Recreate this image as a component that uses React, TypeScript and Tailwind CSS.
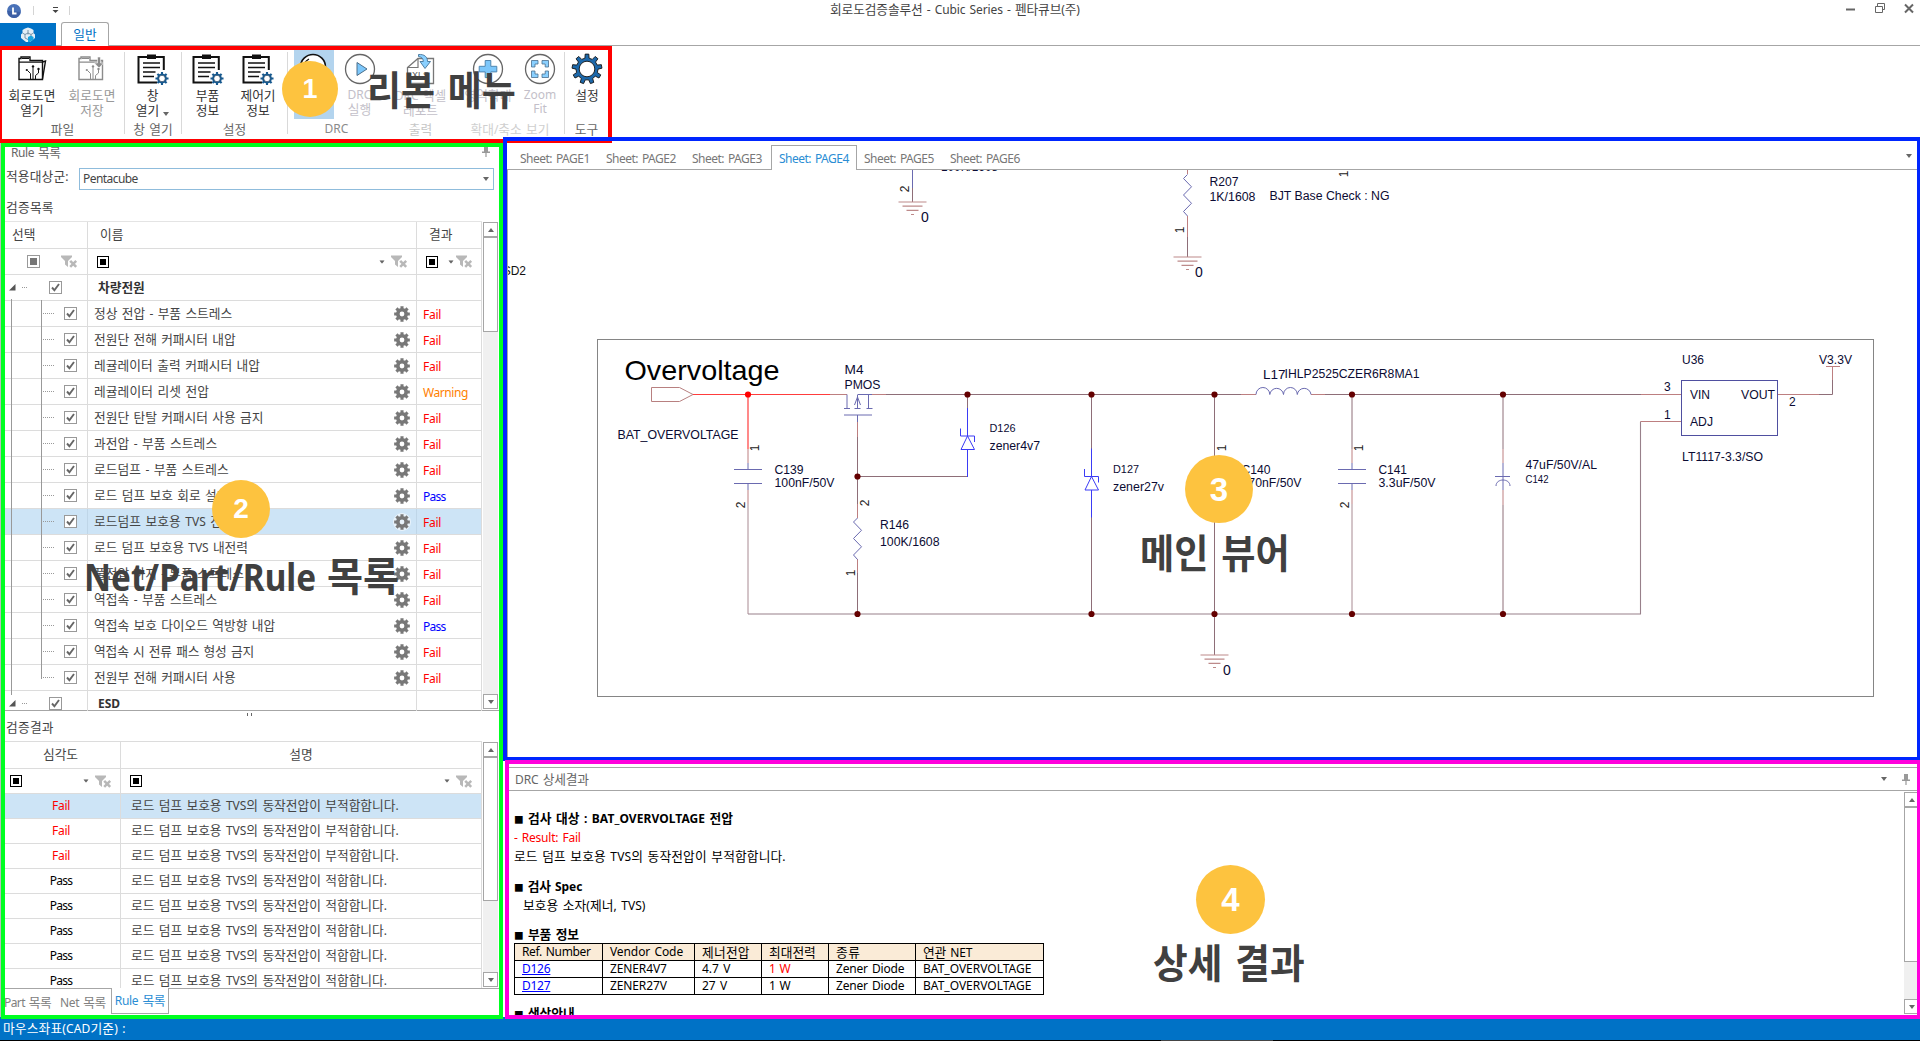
import React, { useLayoutEffect, useRef, useState } from 'react';

type TextProps = { children: string; w?: number; className?: string; stretch?: boolean };

/* Text run: Hangul is set one step larger than Latin; `w` fits the run to a width. */
function T({ children, w, className = '', stretch = false }: TextProps) {
  const ref = useRef<HTMLSpanElement>(null);
  const [fit, setFit] = useState<{ ls: number; sx: number }>({ ls: 0, sx: 1 });
  useLayoutEffect(() => {
    if (!w || !ref.current) return;
    const natural = ref.current.offsetWidth;
    if (stretch) setFit({ ls: 0, sx: w / natural });
    else setFit({ ls: (w - natural) / children.length, sx: 1 });
  }, [w, children, stretch]);
  const parts = children.split(/([\u3130-\uD7A3]+|■)/).filter(Boolean);
  return (
    <span
      ref={ref}
      className={'inline-block origin-left whitespace-pre leading-[16px] [word-spacing:0.1em] ' + className}
      style={{ letterSpacing: fit.ls ? `${fit.ls}px` : undefined, transform: fit.sx !== 1 ? `scaleX(${fit.sx})` : undefined }}
    >
      {parts.map((p, i) => (
        <span key={i} className={p === '■' ? 'text-[0.8em]' : /[\u3130-\uD7A3]/.test(p) ? 'text-[1.06em]' : ''}>
          {p}
        </span>
      ))}
    </span>
  );
}

const Down = ({ className = '' }: { className?: string }) => (
  <svg className={className} width="6" height="4" viewBox="0 0 6 4">
    <path d="M0 0h6L3 4z" fill="#666" />
  </svg>
);

const Pin = () => (
  <svg width="8" height="11" viewBox="0 0 8 11">
    <path d="M2 0h4v5.5h2V7H4.6v4H3.4V7H0V5.500h2z" fill="#999" />
  </svg>
);

const FilterX = () => (
  <svg width="17" height="13" viewBox="0 0 17 13">
    <path d="M0 0.500h11v1.500L7 6v6L4 9.500V6L0 2z" fill="#b8b8b8" />
    <path d="M9 5.500l6.500 6.500M15.500 5.500L9 12" stroke="#fff" strokeWidth="4" />
    <path d="M9.200 5.800l6 6M15.200 5.800l-6 6" stroke="#b8b8b8" strokeWidth="2.500" />
  </svg>
);

const BlackBox = () => (
  <span className="flex h-3 w-3 items-center justify-center border border-black">
    <span className="h-1.5 w-1.5 bg-black" />
  </span>
);

const Check = () => (
  <span className="flex h-[13px] w-[13px] shrink-0 items-center justify-center border border-[#999] bg-white">
    <svg width="9" height="9" viewBox="0 0 9 9">
      <path d="M1 4.500l2.400 2.700L8 1" fill="none" stroke="#666" strokeWidth="1.900" />
    </svg>
  </span>
);

function gearPath(cx: number, cy: number, ro: number, ri: number, n: number, a: number, b: number) {
  let d = '';
  for (let i = 0; i < n; i++) {
    const t = (i * 2 * Math.PI) / n;
    [
      [ri, -b],
      [ro, -a],
      [ro, a],
      [ri, b],
    ].forEach(([r, o], k) => {
      d += `${i === 0 && k === 0 ? 'M' : 'L'}${(cx + r * Math.sin(t + o)).toFixed(2)} ${(cy - r * Math.cos(t + o)).toFixed(2)}`;
    });
  }
  return d + 'Z';
}

const SmallGear = ({ halo = false }: { halo?: boolean }) => (
  <svg width="18" height="18" viewBox="0 0 18 18">
    {halo && <circle cx="9" cy="9" r="9" fill="#e9f3fb" />}
    <path
      d={gearPath(9, 9, 8, 6, 8, 0.2, 0.25) + 'M9 6.600a2.400 2.400 0 1 0 0 4.800a2.400 2.400 0 1 0 0 -4.800Z'}
      fill="#787878"
      fillRule="evenodd"
    />
  </svg>
);

/* ---------- ribbon icons ---------- */
const Folder = ({ save = false }: { save?: boolean }) => {
  const c = save ? '#8c8c8c' : '#111';
  return (
    <svg width="30" height="32" viewBox="0 0 30 32" fill="none" stroke={c} strokeWidth="1.400">
      <path d="M2 26.500V5.500h2V4h9v3.500h12.500v19z" />
      <path d="M2 9.200h23M5 5.500h7" strokeWidth="1.200" />
      {!save && <path d="M25.500 9l3-1-3 18" />}
      <path d="M13.500 26v-5.500l-3-3M16 26V14.500M18.500 26v-3.500l3-2.500v-3.500" strokeWidth="1" />
      <circle cx="9.800" cy="17" r="1.100" fill={c} stroke="none" />
      <circle cx="16" cy="13.500" r="1.200" fill={c} stroke="none" />
      <circle cx="21.500" cy="16" r="1.200" fill={c} stroke="none" />
      {save && <path d="M20.500 4h3v6h3.200L22 15l-4.700-5h3.200z" fill={c} stroke="#fff" strokeWidth="0.600" />}
    </svg>
  );
};

const Clip = () => (
  <svg width="32" height="32" viewBox="0 0 32 32" fill="none">
    <path d="M26.800 17V4H1.500v25.500H20" stroke="#111" strokeWidth="2" />
    <path d="M10 1.500h9V6h-9z" fill="#111" />
    <path d="M6 10h17M6 14.500h17M6 19h12.500M6 23.500h11" stroke="#111" strokeWidth="1.700" />
    <path d={gearPath(25, 25.500, 6.600, 4.900, 8, 0.16, 0.22)} fill="#17598f" />
    <circle cx="25" cy="25.500" r="3.200" fill="#fff" stroke="#0d2f4d" strokeWidth="0.600" />
  </svg>
);

const Ring = ({ children }: { children?: React.ReactNode }) => (
  <svg width="32" height="32" viewBox="0 0 32 32" fill="none">
    <circle cx="16" cy="16" r="14.500" stroke="#666" strokeWidth="1.300" fill="#fff" />
    {children}
  </svg>
);

const icons: Record<string, React.ReactNode> = {
  open: <Folder />,
  save: <Folder save />,
  clip: <Clip />,
  lens: (
    <svg width="32" height="32" viewBox="0 0 32 32" fill="none">
      <circle cx="15" cy="14" r="12.500" stroke="#111" strokeWidth="1.600" fill="#fff" />
      <path d="M6 12a9.500 9.500 0 0 1 5-6" stroke="#111" strokeWidth="1.200" />
    </svg>
  ),
  play: (
    <Ring>
      <path d="M13 9.500v13l10-6.500z" fill="#7cc7fb" stroke="#4d6f8a" strokeWidth="1" />
    </Ring>
  ),
  xls: (
    <svg width="32" height="32" viewBox="0 0 32 32" fill="none">
      <path d="M2.500 30.500V14.500L13 5.500h15.500v25z" stroke="#777" strokeWidth="1.300" />
      <path d="M13 5.500v9H2.500" stroke="#777" strokeWidth="1.200" />
      <text x="7" y="25" fontSize="9" fill="#555" fontFamily="Liberation Sans" textLength="17">XLS</text>
      <path d="M13.500 1.500c6-.500 9 2.500 9 7h3L20 15.500l-5-7h3.300c0-2.500-1.300-4.500-4.800-5z" fill="#8ad0ff" stroke="#44749a" strokeWidth="0.900" />
    </svg>
  ),
  plus: (
    <Ring>
      <path d="M13.200 7.500h5.600v5.800h6v5.600h-6v5.700h-5.600v-5.700h-6v-5.600h6z" fill="#7cc7fb" stroke="#4f86b0" strokeWidth="1" />
    </Ring>
  ),
  fit: (
    <Ring>
      <path
        d="M7.500 14V7.500H14V11h-3v3zM18 7.500h6.500V14h-3.300v-3H18zM7.500 18H11v3h3v3.500H7.500zM24.500 18v6.500H18V21h3.200v-3z"
        fill="#8ad0ff"
        stroke="#4a6f8e"
        strokeWidth="0.800"
      />
    </Ring>
  ),
  gear: (
    <svg width="32" height="32" viewBox="0 0 32 32">
      <path d={gearPath(16, 16, 15, 11, 9, 0.12, 0.19)} fill="#1c68aa" stroke="#141414" strokeWidth="0.900" />
      <circle cx="16" cy="16" r="7.800" fill="#fff" stroke="#141414" strokeWidth="0.900" />
    </svg>
  ),
};

type Btn = { icon: string; l1: string; l2?: string; w: string; faded?: boolean; gray?: boolean; on?: boolean; more?: boolean };
const groups: { w: string; pad: string; cap: string; tone: string; btns: Btn[] }[] = [
  { w: 'w-[124px] border-[#d9d9d9]', pad: 'pl-px', cap: '파일', tone: 'text-[#666]', btns: [
    { icon: 'open', l1: '회로도면', l2: '열기', w: 'w-[60px]' },
    { icon: 'save', l1: '회로도면', l2: '저장', w: 'w-[60px]', gray: true },
  ] },
  { w: 'w-[57px] border-[#d9d9d9]', pad: '', cap: '창 열기', tone: 'text-[#666]', btns: [{ icon: 'clip', l1: '창', l2: '열기', w: 'w-[55px]', more: true }] },
  { w: 'w-[106px] border-[#d9d9d9]', pad: '', cap: '설정', tone: 'text-[#666]', btns: [
    { icon: 'clip', l1: '부품', l2: '정보', w: 'w-[51px]' },
    { icon: 'clip', l1: '제어기', l2: '정보', w: 'w-[50px]' },
  ] },
  { w: 'w-[98px] border-transparent', pad: 'pl-1.5', cap: 'DRC', tone: 'text-[#8a8a8a]', btns: [
    { icon: 'lens', l1: '', w: 'w-[40px]', on: true },
    { icon: 'play', l1: 'DRC', l2: '실행', w: 'w-[51px]', faded: true },
  ] },
  { w: 'w-[70px] border-transparent', pad: '', cap: '출력', tone: 'text-[#c6c6c6]', btns: [{ icon: 'xls', l1: 'DRC 엑셀', l2: '레포트', w: 'w-[69px]', faded: true }] },
  { w: 'w-[109px] border-[#d9d9d9]', pad: 'pl-1.5', cap: '확대/축소 보기', tone: 'text-[#cfcfcf]', btns: [
    { icon: 'plus', l1: '영역확대', w: 'w-[52px]', faded: true },
    { icon: 'fit', l1: 'Zoom', l2: 'Fit', w: 'w-[52px]', faded: true },
  ] },
  { w: 'w-[44px] border-transparent', pad: '', cap: '도구', tone: 'text-[#666]', btns: [{ icon: 'gear', l1: '설정', w: 'w-[44px]' }] },
];

function Ribbon() {
  return (
    <div className="flex h-[91px] pl-px pt-1.5">
      {groups.map((g) => (
        <div key={g.cap + g.w} className={'flex h-[82px] shrink-0 flex-col border-r ' + g.w}>
          <div className={'-mt-0.5 flex h-[69px] shrink-0 ' + g.pad}>
            {g.btns.map((b, i) => (
              <div
                key={i}
                className={
                  'flex shrink-0 flex-col items-center ' + b.w + (b.on ? ' bg-[#b3d4ee]' : '') +
                  (b.gray ? ' text-[#999]' : b.faded ? ' text-[#c3bfc9]' : ' text-[#333]')
                }
              >
                <div className="mt-[3px] h-8">{icons[b.icon]}</div>
                <T className="mt-[3px] leading-[14px]!">{b.l1}</T>
                {b.l2 && (
                  <span className="flex items-center">
                    <T className="leading-[14px]!">{b.l2}</T>
                    {b.more && <Down className="mt-1.5 ml-1" />}
                  </span>
                )}
              </div>
            ))}
          </div>
          <div className={'mt-0.5 flex h-4 shrink-0 items-center justify-center ' + g.tone}>
            <T>{g.cap}</T>
          </div>
        </div>
      ))}
    </div>
  );
}

function TitleBar() {
  return (
    <div className="flex h-[22px] items-start">
      <div className="flex h-5 w-[830px] items-start">
        <svg width="80" height="20" viewBox="0 0 80 20">
          <circle cx="14" cy="11" r="7" fill="#4a72b8" />
          <path d="M7.500 11a6.500 6.500 0 0 0 13 1" fill="#3d5fa5" />
          <path d="M13 7.500v6h3.500" stroke="#fff" strokeWidth="1.800" fill="none" />
          <path d="M33.500 6v9M69.500 6v9" stroke="#d4d4d4" />
          <path d="M53 7.500h5" stroke="#444" />
          <path d="M52.500 10h6l-3 3z" fill="#444" />
        </svg>
      </div>
      <div className="pt-px text-[#444]">
        <T w={250}>회로도검증솔루션 - Cubic Series - 펜타큐브(주)</T>
      </div>
      <svg className="ml-auto" width="80" height="20" viewBox="1840 0 80 20" fill="none" stroke="#666">
        <path d="M1846 9.500h9" strokeWidth="2" />
        <path d="M1875.500 6.500h7v6h-7zM1877.500 6V3.500h7v6H1883" />
        <path d="M1905 4.500l8 8M1913 4.500l-8 8" strokeWidth="2" />
      </svg>
    </div>
  );
}

function RibbonTabs() {
  return (
    <div className="flex h-6 border-b border-[#a6a6a6]">
      <div className="mt-px flex h-[23px] w-14 items-center justify-center bg-[#0072c6]">
        <svg width="16" height="16" viewBox="0 0 16 16">
          <path d="M5 1.500L8 .5l3 1 2.500 1.500v3l1.500 1.500v3.500L12.500 13 10 15H6l-2.500-2L1 11V7.500L2.500 6V3z" fill="#e3eef6" />
          <path d="M8 3v4.500M2.500 6L5 7.500 8 6l3 1.500L13.500 6M5 7.500V11l3 1.500M11 7.500V11" stroke="#5f7f96" strokeWidth="0.800" fill="none" />
          <path d="M8 10l3-1.500 2.500 1.500v2.500L10 15H8z" fill="#1aa3dd" />
        </svg>
      </div>
      <div className="ml-[5px] flex h-6 w-12 items-center justify-center rounded-t-[3px] border border-b-0 border-[#a6a6a6] bg-white text-[#0072c6]">
        <T>일반</T>
      </div>
    </div>
  );
}

function ScrollBar({ thumb }: { thumb: string }) {
  return (
    <div className="flex h-full w-[15px] flex-col bg-[#f0f0f0]">
      <div className="flex h-[15px] shrink-0 items-center justify-center border border-[#a6a6a6] bg-white">
        <Down className="rotate-180" />
      </div>
      <div className={'w-full border border-[#a6a6a6] bg-white ' + thumb} />
      <div className="mt-auto flex h-[15px] shrink-0 items-center justify-center border border-[#a6a6a6] bg-white">
        <Down />
      </div>
    </div>
  );
}

const rules: [string, string, number][] = [
  ['정상 전압 - 부품 스트레스', 'Fail', 138],
  ['전원단 전해 커패시터 내압', 'Fail', 142],
  ['레귤레이터 출력 커패시터 내압', 'Fail', 166],
  ['레귤레이터 리셋 전압', 'Warning', 115],
  ['전원단 탄탈 커패시터 사용 금지', 'Fail', 169],
  ['과전압 - 부품 스트레스', 'Fail', 123],
  ['로드덤프 - 부품 스트레스', 'Fail', 135],
  ['로드 덤프 보호 회로 설계', 'Pass', 134],
  ['로드덤프 보호용 TVS 전압', 'Fail', 140],
  ['로드 덤프 보호용 TVS 내전력', 'Fail', 154],
  ['풀전압 하지 - 부품 스트레스', 'Fail', 150],
  ['역접속 - 부품 스트레스', 'Fail', 123],
  ['역접속 보호 다이오드 역방향 내압', 'Pass', 181],
  ['역접속 시 전류 패스 형성 금지', 'Fail', 160],
  ['전원부 전해 커패시터 사용', 'Fail', 142],
];

const resultColor: Record<string, string> = { Fail: 'text-[#f00]', Warning: 'text-[#ff8000]', Pass: 'text-[#00f]' };

function GroupRow({ name, w, last = false }: { name: string; w?: number; last?: boolean }) {
  return (
    <div className={'flex ' + (last ? 'h-5 overflow-hidden' : 'h-[26px] border-b border-[#dcdcdc]')}>
      <div className="flex h-[25px] w-[83px] items-center border-r border-[#dcdcdc] pl-1">
        <svg width="7" height="7" viewBox="0 0 7 7"><path d="M6.500 0v6.500H0z" fill="#555" /></svg>
        <span className="ml-1.5 w-[5px] border-t border-dotted border-[#999]" />
        <span className="ml-[22px]"><Check /></span>
      </div>
      <div className="flex h-[25px] w-[329px] items-center border-r border-[#dcdcdc] pl-2.5 font-bold text-[#333]"><T w={w}>{name}</T></div>
      <div className="h-[25px] w-[65px] border-r border-[#dcdcdc]" />
    </div>
  );
}

function RuleGrid() {
  return (
    <div className="flex h-[490px] border-b border-[#a6a6a6]">
      <div className="w-[477px] border-t border-[#e4e4e4] text-[#444]">
        <div className="flex h-[27px] border-b border-[#dcdcdc] pb-px">
          <div className="-mb-px flex w-[83px] items-center border-r border-[#dcdcdc] pb-px pl-[7px]"><T>선택</T></div>
          <div className="-mb-px flex w-[329px] items-center border-r border-[#dcdcdc] pb-px pl-3"><T>이름</T></div>
          <div className="-mb-px flex w-[65px] items-center border-r border-[#dcdcdc] pb-px pl-3"><T>결과</T></div>
        </div>
        <div className="flex h-[26px] border-b border-[#dcdcdc]">
          <div className="flex w-[83px] items-center border-r border-[#dcdcdc] pl-[22px]">
            <span className="flex h-[13px] w-[13px] items-center justify-center border border-[#999]"><span className="h-[7px] w-[7px] bg-[#777]" /></span>
            <span className="ml-[21px]"><FilterX /></span>
          </div>
          <div className="flex w-[329px] items-center border-r border-[#dcdcdc] pl-[9px] pr-2">
            <BlackBox />
            <Down className="ml-auto mr-[6px] scale-90" />
            <FilterX />
          </div>
          <div className="flex w-[65px] items-center border-r border-[#dcdcdc] pl-[9px]">
            <BlackBox />
            <Down className="ml-2.5 mr-[2px] scale-90" />
            <FilterX />
          </div>
        </div>
        <div className="relative">
          <GroupRow name="차량전원" w={47} />
          {rules.map(([name, res, w], i) => {
            const sel = i === 8;
            return (
              <div key={i} className={'flex h-[26px] border-b border-[#dcdcdc] ' + (sel ? 'bg-[#cde4f6]' : '')}>
                <div className={'flex w-[83px] items-center border-r pl-9 ' + (sel ? 'border-[#bfd6e8]' : 'border-[#dcdcdc]')}>
                  <span className="mr-2.5 w-[13px] border-t border-dotted border-[#999]" />
                  <Check />
                </div>
                <div className={'flex w-[329px] items-center border-r pl-[6px] pr-[5px] ' + (sel ? 'border-[#bfd6e8]' : 'border-[#dcdcdc]')}>
                  <T w={w}>{name}</T>
                  <span className="ml-auto"><SmallGear halo={sel} /></span>
                </div>
                <div className={'flex w-[65px] items-center border-r border-[#dcdcdc] pl-1.5 pt-0.5 ' + resultColor[res]}>
                  <T w={res === 'Fail' ? 18 : res === 'Pass' ? 23 : 45}>{res}</T>
                </div>
              </div>
            );
          })}
          <GroupRow name="ESD" w={22} last />
          <span className="absolute left-1.5 top-6 h-[396px] w-px bg-[#999]" />
          <span className="absolute left-9 top-[25px] h-[379px] w-px bg-[#999]" />
        </div>
      </div>
      <div className="ml-px pb-px pt-px"><ScrollBar thumb="h-[95px]" /></div>
    </div>
  );
}

function ResultGrid() {
  return (
    <div className="flex h-[248px] border-b border-[#a6a6a6]">
      <div className="h-[247px] w-[477px] overflow-hidden border-t border-[#dcdcdc] text-[#444]">
        <div className="flex h-[27px] border-b border-[#dcdcdc]">
          <div className="flex w-[116px] items-center justify-center border-r border-[#dcdcdc] pb-px pr-1"><T>심각도</T></div>
          <div className="flex w-[361px] items-center justify-center border-r border-[#dcdcdc] pb-px"><T>설명</T></div>
        </div>
        <div className="flex h-[25px] border-b border-[#dcdcdc]">
          <div className="flex w-[116px] items-center border-r border-[#dcdcdc] pl-[5px] pr-2">
            <BlackBox /><Down className="ml-auto mr-[6px] scale-90" /><FilterX />
          </div>
          <div className="flex w-[361px] items-center border-r border-[#dcdcdc] pl-[9px] pr-2">
            <BlackBox /><Down className="ml-auto mr-[6px] scale-90" /><FilterX />
          </div>
        </div>
        {[0, 1, 2, 3, 4, 5, 6, 7].map((i) => {
          const fail = i < 3;
          return (
            <div key={i} className={'flex h-[25px] border-b border-[#dcdcdc] ' + (i === 0 ? 'bg-[#cde4f6]' : '')}>
              <div className={'flex w-[116px] items-center justify-center border-r border-[#dcdcdc] pr-[3px] ' + (fail ? 'text-[#f00]' : 'text-black')}>
                <T w={fail ? 18 : 23}>{fail ? 'Fail' : 'Pass'}</T>
              </div>
              <div className="flex w-[361px] items-center border-r border-[#dcdcdc] pb-0.5 pl-2.5">
                {fail ? <T w={268}>로드 덤프 보호용 TVS의 동작전압이 부적합합니다.</T> : <T w={256}>로드 덤프 보호용 TVS의 동작전압이 적합합니다.</T>}
              </div>
            </div>
          );
        })}
      </div>
      <div className="ml-px pb-px pt-px"><ScrollBar thumb="h-[144px]" /></div>
    </div>
  );
}

function LeftPanel() {
  return (
    <div className="flex w-[503px] flex-col border-l border-[#bbb] pl-[3px] text-[#444]">
      <div className="flex h-[31px] items-start pl-[7px] pt-[7px] text-[#666]">
        <T w={49}>Rule 목록</T>
        <span className="ml-auto mr-[13px] mt-0.5"><Pin /></span>
      </div>
      <div className="flex h-[22px]">
        <span className="w-[75px] pl-0.5"><T w={63} className="-mt-px">적용대상군:</T></span>
        <div className="flex h-[22px] w-[415px] items-center justify-between border border-[#8fbcdc] pl-[3px] pr-1">
          <T w={55}>Pentacube</T>
          <Down />
        </div>
      </div>
      <div className="h-[31px] pl-0.5 pt-[9px]"><T w={48}>검증목록</T></div>
      <div className="pl-px">
        <RuleGrid />
        <div className="flex h-[7px] justify-center gap-[3px] pr-[9px] pt-0.5">
          <span className="h-[3px] w-px bg-[#666]" />
          <span className="h-[3px] w-px bg-[#666]" />
        </div>
        <div className="h-[23px] pl-px pt-px"><T w={48}>검증결과</T></div>
        <ResultGrid />
        <div className="flex h-[26px] text-[#808080]">
          <div className="flex w-[55px] items-center"><T w={47} className="-ml-px">Part 목록</T></div>
          <div className="flex w-[51px] items-center"><T w={46}>Net 목록</T></div>
          <div className="-mt-px flex h-[26px] w-[58px] items-center justify-center border border-t-0 border-[#a6a6a6] bg-white text-[#2a8dd4]"><T w={50}>Rule 목록</T></div>
        </div>
      </div>
    </div>
  );
}

/* ---------- schematic ---------- */
const WIRE = '#8e6e78';
const PIN = '#bd7f80';
const SYM = '#6a6ab0';
const BLUE = '#3b3bf5';

const L = ({ d, c = WIRE, w = 1 }: { d: string; c?: string; w?: number }) => <path d={d} stroke={c} strokeWidth={w} fill="none" />;
const S = ({ x, y, t, w, s = 12, c = '#0b0b33' }: { x: number; y: number; t: string; w?: number; s?: number; c?: string }) => (
  <text x={x} y={y} fontSize={s} fill={c} textLength={w} lengthAdjust="spacingAndGlyphs">{t}</text>
);
const R = ({ x, y, t }: { x: number; y: number; t: string }) => (
  <text transform={`translate(${x + 4} ${y}) rotate(-90)`} textAnchor="middle" fontSize="12" fill="#222">{t}</text>
);
const Dot = ({ x, y, c = '#640000' }: { x: number; y: number; c?: string }) => <circle cx={x} cy={y} r="3.100" fill={c} />;
const Ground = ({ x, y }: { x: number; y: number }) => (
  <g stroke="#bd8a8a" strokeWidth="1.200">
    <path d={`M${x - 14} ${y}h28M${x - 10} ${y + 4.200}h20M${x - 6} ${y + 8.400}h12M${x - 1.500} ${y + 12.500}h3`} />
  </g>
);
const Zener = ({ x, y }: { x: number; y: number }) => (
  <L c={BLUE} d={`M${x} ${y - 28}V${y}M${x - 7} ${y - 7.500}V${y}h14v6M${x} ${y}l-6.500 13.500h13.500zM${x} ${y + 13.500}V${y + 41}`} />
);
const Cap = ({ x }: { x: number }) => (
  <g>
    <L c={PIN} d={`M${x} 449V463M${x} 490V504`} />
    <L c={SYM} d={`M${x} 463V469.500M${x - 14} 469.500h28M${x - 14} 483.500h28M${x} 483.500V490`} />
    <L c="#a88a92" d={`M${x} 504V614`} />
    <R x={x + 7} y={448} t="1" />
    <R x={x - 7} y={505} t="2" />
  </g>
);
const Res = ({ x, y }: { x: number; y: number }) => (
  <L c={SYM} d={`M${x} ${y}l-4 4 8 8.300-8 8.200 8 8.300-8 8.200 4 4.500`} />
);

function Schematic() {
  return (
    <svg className="block" width="1409" height="587" viewBox="508 170 1409 587" fontFamily="Liberation Sans">
      <text x="526" y="274.500" fontSize="12" textAnchor="end" fill="#111">GSD2</text>
      <S x={941} y={170.5} t="100K/1608" w={57} />
      <L d="M912.500 170V188" c={SYM} /><L d="M912.500 188V202" />
      <Ground x={912.5} y={202} />
      <R x={905} y={189} t="2" />
      <S x={921} y={222} t="0" s={14} />
      <L c={PIN} d="M1187.500 170V174M1187.500 216V237" /><L d="M1187.500 237V257" />
      <Res x={1187.5} y={174.5} />
      <Ground x={1187.5} y={257} />
      <R x={1180} y={230} t="1" />
      <S x={1195} y={277} t="0" s={14} />
      <S x={1209.5} y={185.5} t="R207" w={29} />
      <S x={1209.5} y={201} t="1K/1608" w={46} />
      <S x={1269.5} y={199.5} t="BJT Base Check : NG" w={120} />
      <R x={1344} y={174} t="1" />

      <rect x="597.500" y="339.500" width="1276" height="357" fill="none" stroke="#858585" />
      <S x={624.5} y={379.5} t="Overvoltage" w={155} s={28.5} c="#000" />
      <path d="M651.500 387.500H679.500L693 394.500 679.500 401.500H651.500z" fill="none" stroke="#b88080" />
      <S x={617.500} y={439} t="BAT_OVERVOLTAGE" w={121} />

      <L d="M693 394.500H830M748 394.500V449" c="#ff3c3c" w={1.2} />
      <L d="M830 394.500H847M872 394.500H886M1241 394.500H1256M1311 394.500H1325M1641 394.500H1681M1778 394.500H1819" c={PIN} />
      <L d="M886 394.500H1241M1325 394.500H1641M1819 394.500H1832.500V380" />
      <L d="M1832.500 380V366.500M1826 366.500H1840" c={PIN} />
      <L d="M748 614H1640.500V421.500" c="#98808a" w={1.1} />
      <L d="M1640.500 421.500H1681" c={PIN} />

      <Cap x={748} />
      <S x={774.500} y={474} t="C139" w={29} />
      <S x={774.500} y={487} t="100nF/50V" w={60} />

      <S x={844.500} y={373.500} t="M4" w={19} />
      <S x={844.500} y={389} t="PMOS" w={36} />
      <L c={SYM} d="M847 394.500V408M844 408.500h6M857.500 395V408M854.500 408.500h6M854.500 405l3-8 3 8M857.500 394.500H872M868.500 394.500V408M866.500 408.500h6M844 415h28M857.500 415V422" />
      <L c={PIN} d="M857.500 422V437M857.500 504V518M857.500 559V573" />
      <L d="M857.500 437V504M857.500 476.500H967.500M857.500 573V614" />
      <Res x={857.5} y={518} />
      <R x={865} y={503} t="2" />
      <R x={851} y={573} t="1" />
      <S x={880} y={529} t="R146" w={29} />
      <S x={880} y={546} t="100K/1608" w={59.5} />

      <L d="M967.500 394.500V408M1091.500 394.500V450M1091.500 517V614M1214.500 394.500V655M1352 394.500V449M1503 394.500V449M1503 505V614" />
      <Zener x={967.5} y={436} />
      <S x={989.500} y={432} t="D126" w={26} s={11} />
      <S x={989.500} y={449.500} t="zener4v7" w={50.5} />
      <Zener x={1091.5} y={476.5} />
      <S x={1113} y={473} t="D127" w={26} s={11} />
      <S x={1113} y={490.500} t="zener27v" w={51} />

      <R x={1221.5} y={448} t="1" />
      <S x={1241.500} y={474} t="C140" w={29} />
      <S x={1241.500} y={487} t="470nF/50V" w={60} />
      <Ground x={1214.5} y={655} />
      <S x={1223} y={675} t="0" s={14} />

      <path d="M1256 394.500a6.900 7 0 0 1 13.800 0a6.900 7 0 0 1 13.700 0a6.900 7 0 0 1 13.800 0a6.900 7 0 0 1 13.700 0" fill="none" stroke={SYM} />
      <S x={1263} y={379} t="L17" w={22.5} />
      <S x={1284.500} y={378} t="IHLP2525CZER6R8MA1" w={135} />

      <Cap x={1352} />
      <S x={1378.500} y={474} t="C141" w={28.5} />
      <S x={1378.500} y={487} t="3.3uF/50V" w={57} />

      <L c={PIN} d="M1503 449V463M1503 490V505" />
      <L c={SYM} d="M1503 463V490M1495 476.500H1510M1496 486c0-8 14-8 14 0" />
      <S x={1525.500} y={469} t="47uF/50V/AL" w={71.5} />
      <S x={1525.500} y={483} t="C142" w={23} s={10} />

      <rect x="1681.500" y="380.500" width="96" height="55" fill="none" stroke="#4f4fa0" />
      <S x={1682} y={364} t="U36" w={22} />
      <S x={1690} y={399} t="VIN" w={20} />
      <S x={1741} y={399} t="VOUT" w={34} />
      <S x={1690} y={426} t="ADJ" w={23} />
      <S x={1664} y={391} t="3" />
      <S x={1664} y={419} t="1" />
      <S x={1789} y={406} t="2" />
      <S x={1682} y={461} t="LT1117-3.3/SO" w={81} />
      <S x={1819} y={364} t="V3.3V" w={33} />

      <Dot x={748} y={394.500} c="#f00" />
      {[967.5, 1091.5, 1214.5, 1352, 1503].map((x) => <Dot key={x} x={x} y={394.500} />)}
      <Dot x={857.5} y={476.500} />
      {[857.5, 1091.5, 1214.5, 1352, 1503].map((x) => <Dot key={x} x={x} y={614} />)}
    </svg>
  );
}

function Viewer() {
  return (
    <div className="flex h-[620px] flex-col pl-1 pt-[4px]">
      <div className="flex h-[29px] items-end border-b border-[#a6a6a6]">
        <div className="w-[6px]" />
        {[1, 2, 3, 4, 5, 6].map((n) => (
          <div
            key={n}
            className={
              'flex w-[86px] pl-[7px] ' +
              (n === 4 ? '-mb-px h-[25px] border border-b-0 border-[#a6a6a6] bg-white pt-[5px] text-[#2a8dd4]' : 'h-6 pl-2 pt-[6px] text-[#777]')
            }
          >
            <T w={70}>{`Sheet: PAGE${n}`}</T>
          </div>
        ))}
        <Down className="mb-[11px] ml-auto mr-2" />
      </div>
      <div className="h-[587px] w-[1410px] border-l border-[#a6a6a6]"><Schematic /></div>
    </div>
  );
}

const cols = ['w-[88px]', 'w-[92px]', 'w-[67px]', 'w-[67px]', 'w-[87px]', 'w-[128px]'];
const tableRows: [string, number][][] = [
  [['Ref. Number', 69], ['Vendor Code', 73], ['제너전압', 48], ['최대전력', 47], ['종류', 24], ['연관 NET', 49]],
  [['D126', 28], ['ZENER4V7', 57], ['4.7 V', 28], ['1 W', 21], ['Zener Diode', 68], ['BAT_OVERVOLTAGE', 108]],
  [['D127', 28], ['ZENER27V', 57], ['27 V', 25], ['1 W', 21], ['Zener Diode', 68], ['BAT_OVERVOLTAGE', 108]],
];

function Detail() {
  return (
    <div className="flex h-[260px] flex-col pl-[6px] pt-[10px]">
      <div className="flex h-6 items-center border-y border-[#a6a6a6] pl-[6px] pr-[10px] text-[#666]">
        <T w={74}>DRC 상세결과</T>
        <Down className="ml-auto mr-[15px]" />
        <Pin />
      </div>
      <div className="flex h-[224px] justify-between overflow-hidden">
        <div className="pl-[5px] pt-[19px] text-black">
          <div className="h-[19px] font-bold"><T w={219}>■ 검사 대상 : BAT_OVERVOLTAGE 전압</T></div>
          <div className="h-[19px] text-[#f00]"><T w={67}>- Result: Fail</T></div>
          <div className="h-[30px]"><T w={272}>로드 덤프 보호용 TVS의 동작전압이 부적합합니다.</T></div>
          <div className="h-[19px] font-bold"><T w={68}>■ 검사 Spec</T></div>
          <div className="h-[29px] pl-[9px]"><T w={122}>보호용 소자(제너, TVS)</T></div>
          <div className="h-[17px] font-bold"><T w={65}>■ 부품 정보</T></div>
          <div className="w-[530px] border-l border-t border-black">
            {tableRows.map((r, i) => (
              <div key={i} className={'flex h-[17px] ' + (i === 0 ? 'bg-[#faebd7]' : '')}>
                {r.map(([t, w], j) => (
                  <div
                    key={j}
                    className={
                      'flex items-center border-b border-r border-black pl-[7px] ' + cols[j] +
                      (i > 0 && j === 0 ? ' text-[#00f] underline' : '') + (i === 1 && j === 3 ? ' text-[#f00]' : '')
                    }
                  >
                    <T w={w}>{t}</T>
                  </div>
                ))}
              </div>
            ))}
          </div>
          <div className="mt-[10px] font-bold"><T w={61}>■ 색상안내</T></div>
        </div>
        <div className="mr-px h-[223px] pt-px"><ScrollBar thumb="h-[155px]" /></div>
      </div>
    </div>
  );
}

/* ---------- callouts over the page ---------- */
const Badge = ({ n, pos, size }: { n: number; pos: string; size: string }) => (
  <div className={'absolute flex items-center justify-center rounded-full bg-[#fdc33f] font-["Liberation_Sans"] font-bold leading-none text-white ' + pos + ' ' + size}>{n}</div>
);
const Big = ({ t, w, pos }: { t: string; w: number; pos: string }) => (
  <div className={'absolute text-[37px] font-bold text-[#404040] ' + pos}>
    <T w={w} stretch className="leading-[40px]!">{t}</T>
  </div>
);

export default function App() {
  return (
    <div className="relative flex h-[1041px] w-[1920px] flex-col overflow-hidden bg-white font-['Noto_Sans','Noto_Sans_CJK_KR',sans-serif] text-[12px]">
      <TitleBar />
      <RibbonTabs />
      <Ribbon />
      <div className="flex h-[880px]">
        <LeftPanel />
        <div className="flex w-[1417px] flex-col">
          <Viewer />
          <Detail />
        </div>
      </div>
      <div className="flex h-[23px] items-center bg-[#0072c6] pl-[3px] text-white"><T w={123}>마우스좌표(CAD기준) :</T></div>
      <div className="flex h-px bg-black"><span className="ml-[1161px] w-28 bg-[#444]" /></div>

      <div className="absolute -left-0.5 top-[46px] h-[97px] w-[614px] border-4 border-[#f00]" />
      <div className="absolute left-px top-[143px] h-[876px] w-[502px] border-4 border-[#00ff21]" />
      <div className="absolute left-[503px] top-[137px] h-[624px] w-[1418px] border-4 border-[#0026ff]" />
      <div className="absolute left-[505px] top-[760px] h-[259px] w-[1416px] border-4 border-[#ff00dc]" />

      <Badge n={1} pos="left-[282px] top-[61px]" size="h-14 w-14 text-[27px]" />
      <Badge n={2} pos="left-[212px] top-[480px]" size="h-[58px] w-[58px] text-[28px]" />
      <Badge n={3} pos="left-[1185px] top-[455px]" size="h-[68px] w-[68px] text-[33px]" />
      <Badge n={4} pos="left-[1196px] top-[865px]" size="h-[69px] w-[69px] text-[33px]" />
      <Big t="리본 메뉴" w={149} pos="left-[367px] top-[63px]" />
      <Big t="Net/Part/Rule" w={232} pos="left-[84px] top-[549px]" />
      <Big t="목록" w={72} pos="left-[327px] top-[549px]" />
      <Big t="메인 뷰어" w={150} pos="left-[1140px] top-[526px]" />
      <Big t="상세 결과" w={152} pos="left-[1153px] top-[936px]" />
    </div>
  );
}
